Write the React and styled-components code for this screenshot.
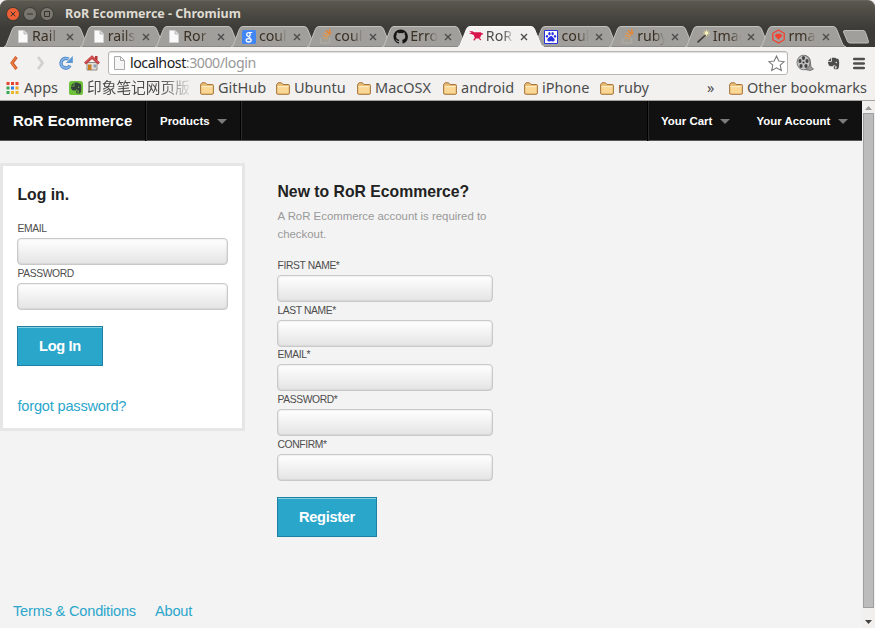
import React from "react";
import styled, { createGlobalStyle } from "styled-components";

const Global = createGlobalStyle`
  * { box-sizing: border-box; }
  body { margin: 0; overflow: hidden; font-family: "Liberation Sans", Arial, sans-serif; }
  a { text-decoration: none; color: inherit; }
`;
const Window = styled.div`
  width: 875px; height: 628px; display: flex; flex-direction: column;
  background: #f3f3f3; overflow: hidden;
`;
const Frame = styled.header`
  height: 47px; background: linear-gradient(#5b594f 0, #4a4943 13px, #3d3c38 27px, #3b3a36 47px);
  border-top: 1px solid #67655b; border-radius: 7px 7px 0 0;
`;
const TitleBar = styled.div`
  height: 25px; display: flex; align-items: center; padding-left: 6px; gap: 3px;
`;
const Title = styled.span`
  margin-left: 8px; font: bold 12.5px/24px "Noto Sans", sans-serif;
  color: #dfdbd2; white-space: nowrap;
`;
const TabStrip = styled.nav`
  display: flex; height: 21px; padding-left: 4px;
`;
const TabBox = styled.div`
  position: relative; flex: none; width: 86.65px; height: 21px; margin-right: -11px;
  z-index: ${(p) => (p.$active ? 2 : 1)};
  display: flex; align-items: center; padding-left: 11px;
`;
const TabShape = styled.svg`
  position: absolute; left: 0; top: 0;
`;
const TabIcon = styled.svg`
  position: relative; flex: none; width: 16px; height: 16px; margin-top: -1px;
`;
const TabLabel = styled.span`
  position: relative; flex: none; width: 28px; margin: -1px 0 0 1px; white-space: nowrap;
  font: 14.2px/20px "Noto Sans", sans-serif; color: ${(p) => (p.$active ? "#4c4c4c" : "#3b3022")};
  mask-image: linear-gradient(90deg, #000 17px, transparent 28px);
`;
const TabClose = styled.svg`
  position: relative; flex: none; width: 8px; height: 8px; margin-left: 6px; margin-top: 1px;
`;
const NewTab = styled.svg`
  flex: none; margin: 4px 0 0 6px;
`;
const Toolbar = styled.div`
  height: 30px; flex: none; background: #f2f1f0; display: flex; align-items: center; padding: 2px 7px 0 6px;
`;
const NavIcons = styled.div`
  display: flex; gap: 10px; width: 102px; align-items: center;
`;
const Address = styled.div`
  width: 680px; height: 24px; border: 1px solid #b9b7b4; border-radius: 3px; background: #fff;
  display: flex; align-items: center; padding: 0 2px 0 4px; box-shadow: inset 0 1px 1px #ddd;
`;
const Url = styled.span`
  flex: 1; margin-left: 3px; font: 14.2px/20px "Noto Sans", sans-serif; color: #999;
  letter-spacing: -0.46px;
  b { font-weight: 400; color: #222; }
`;
const Extensions = styled.div`
  display: flex; align-items: center; gap: 12px; margin-left: 8px;
`;
const Bookmarks = styled.div`
  height: 24px; flex: none; background: #f2f1f0; border-bottom: 1px solid #a5a39f;
  display: flex; align-items: center; padding: 0 0 1px 5px;
`;
const Bookmark = styled.span`
  display: flex; align-items: center; gap: ${(p) => p.$gap || 4}px; width: ${(p) => p.$w}px; flex: none;
  font: 14.5px/20px "Noto Sans", "Noto Sans CJK SC", sans-serif; color: #4c4c4c; white-space: nowrap;
`;
const BookmarkText = styled.span`
  margin-top: -3px;
`;
const Fade = styled(BookmarkText)`
  font-size: 14.7px; margin-top: -2px;
  mask-image: linear-gradient(90deg, #000 74px, transparent 106px);
`;
const View = styled.div`
  flex: 1; display: flex; min-height: 0;
`;
const Page = styled.main`
  width: 862px; height: 527px; background: #f3f3f3;
`;
const TopBar = styled.nav`
  height: 40px; background: #111; display: flex; border-bottom: 1px solid #555; color: #fff;
`;
const Brand = styled.a`
  width: 146px; padding-left: 13px; font: bold 14.9px/40px "Liberation Sans", sans-serif;
`;
const MenuItem = styled.a`
  width: ${(p) => p.$w}px; height: 40px; display: flex; align-items: center; justify-content: space-between;
  padding: 0 14px 0 ${(p) => p.$pl}px; font: bold 11.45px/40px "Liberation Sans", sans-serif;
  border-left: ${(p) => (p.$line ? "1px solid #2b2b2b" : "none")};
  box-shadow: ${(p) => (p.$line ? "-1px 0 0 #000" : "none")};
  &::after { content: ""; border: 5px solid transparent; border-top-color: #7b7b7b; border-bottom: 0; }
`;
const Spacer = styled.div`
  flex: 1; border-left: 1px solid #2b2b2b; box-shadow: -1px 0 0 #000;
`;
const Columns = styled.section`
  display: flex; align-items: flex-start; height: 437px; padding-top: 22px;
`;
const LoginPanel = styled.form`
  width: 245px; height: 268px; background: #fff; border: 3px solid #e6e6e6; padding: 18px 14px 0;
`;
const Register = styled.form`
  width: 216px; margin-left: 32px; padding-top: 18px;
`;
const Heading = styled.h1`
  margin: 0 0 ${(p) => p.$mb}px; padding-left: 0.5px;
  font: bold 15.75px/22px "Liberation Sans", sans-serif; color: #222; white-space: nowrap;
`;
const Hint = styled.p`
  margin: 0 0 14px; padding-left: 0.5px; font-size: 11.4px; line-height: 18px; color: #999; white-space: nowrap;
`;
const Label = styled.label`
  display: block; height: 44.7px; padding-top: 1px; font-size: 10.3px; letter-spacing: -0.38px;
  line-height: 16.9px; color: #4d4d4d; white-space: nowrap; text-indent: 0.5px;
`;
const Input = styled.input`
  display: block; width: 100%; height: 27px; border: 1px solid #c9c9c9; border-radius: 4px;
  background: linear-gradient(#fff, #e4e4e4); box-shadow: inset 0 0 2px rgba(0, 0, 0, 0.18); outline: none;
`;
const Button = styled.button`
  display: block; width: ${(p) => p.$w}px; height: 40px; margin-top: 17px; padding: 0 0 1px;
  border: 1px solid #1e81a3; background: #2ba6cb; box-shadow: inset 0 1px 0 rgba(255, 255, 255, 0.45);
  color: #fff; font: bold 14.6px/36px "Liberation Sans", sans-serif; letter-spacing: -0.3px;
`;
const Link = styled.a`
  color: #2ba6cb; font-size: 14.6px; letter-spacing: -0.2px; line-height: 20px; white-space: nowrap;
`;
const Forgot = styled(Link)`
  display: block; margin-top: 30px; padding-left: 0.5px;
`;
const Footer = styled.footer`
  display: flex; gap: 19px; padding: 23px 0 0 13px;
`;
const Scrollbar = styled.div`
  width: 13px; background: #f1f0ef; display: flex; flex-direction: column; align-items: center; padding-top: 5px;
`;
const Thumb = styled.div`
  width: 11px; height: 495px; margin: 3px 0 12px; background: #bcbcbc; border: 1px solid #9f9f9f;
`;

const Small = ({ w = 16, h = 16, box = "0 0 16 16", children }) => (
  <svg width={w} height={h} viewBox={box}>{children}</svg>
);

const glyphs = {
  page: (
    <>
      <path d="M3.5 2.5h5.5l3.5 3.5v8.5h-9z" fill="#fafafa" stroke="#d2d2d2" />
      <path d="M9 2.5V6h3.5" fill="#ddd" stroke="#bbb" />
    </>
  ),
  google: (
    <>
      <rect x="0" y="2" width="14" height="14" rx="1.5" fill="#4285f4" />
      <circle cx="6.500" cy="6.500" r="1.800" fill="none" stroke="#fff" strokeWidth="1.300" />
      <ellipse cx="6.700" cy="12.300" rx="2.500" ry="1.700" fill="none" stroke="#fff" strokeWidth="1.300" />
      <path d="M7 4.500h3.300M6 8.500q1.800.8 2.500 2" fill="none" stroke="#fff" strokeWidth="1.200" />
    </>
  ),
  stack: (
    <>
      <path d="M2.500 10v4.800h9V10" fill="none" stroke="#b0aba2" strokeWidth="1.300" />
      <path d="M4.300 12.700h5.500" stroke="#a89f90" strokeWidth="1.200" />
      <path d="M4.300 10.200l5.600.6" stroke="#c1a277" strokeWidth="1.200" />
      <path d="M4.800 7.400l5.400 1.800M6 4.500l4.800 3.200" stroke="#e79a4b" strokeWidth="1.200" />
      <path d="M8.200 2.200l3.500 4.500M11.400 1l1.300 5.200" stroke="#f4811f" strokeWidth="1.300" />
    </>
  ),
  github: (
    <path transform="translate(.5 1.500) scale(.9)" fill="#161514" d="M8 0C3.58 0 0 3.58 0 8c0 3.54 2.29 6.53 5.47 7.59.4.07.55-.17.55-.38v-1.49c-2.01.37-2.53-.49-2.69-.94-.09-.23-.48-.94-.82-1.13-.28-.15-.68-.52-.01-.53.63-.01 1.08.58 1.23.82.72 1.21 1.87.87 2.33.66.07-.52.28-.87.51-1.07-1.78-.2-3.64-.89-3.64-3.95 0-.87.31-1.59.82-2.15-.08-.2-.36-1.02.08-2.12 0 0 .67-.21 2.2.82a7.6 7.6 0 0 1 4 0c1.53-1.04 2.2-.82 2.2-.82.44 1.1.16 1.92.08 2.12.51.56.82 1.27.82 2.15 0 3.07-1.87 3.75-3.65 3.95.29.25.54.73.54 1.48v2.2c0 .21.15.46.55.38A8 8 0 0 0 16 8c0-4.42-3.58-8-8-8z" />
  ),
  ror: (
    <path fill="#d9144a" d="M0 3l3.500.2L5 4.300h6.800l.9 1h1.300v.9l-1.800.7-.8 2.300-1 .9 1.500.8.300 1.200-1.100.200-1.300-1.700H6.800l-1 1.800-1.300-.200.200-1.200 1.100-.9-1-3.200L0 5.200l2.600-.8z" />
  ),
  baidu: (
    <>
      <path d="M.5 2.500h13v13H.5z" fill="#fff" stroke="#2932e1" />
      <path d="M7 8c1.500 0 2 1.500 3.200 2.500 1.200 1.400.2 3.300-1.500 2.900-1-.3-2.400-.3-3.400 0-1.700.4-2.700-1.500-1.500-2.900C5 9.500 5.500 8 7 8z" fill="#2932e1" />
      <ellipse cx="5.400" cy="5.700" rx="1.200" ry="1.600" fill="#2932e1" /><ellipse cx="8.600" cy="5.700" rx="1.200" ry="1.600" fill="#2932e1" />
      <ellipse cx="3" cy="8.300" rx="1.100" ry="1.400" fill="#2932e1" /><ellipse cx="11" cy="8.300" rx="1.100" ry="1.400" fill="#2932e1" />
    </>
  ),
  wand: (
    <>
      <path d="M1.500 14.300L9.500 7" stroke="#3f3b36" strokeWidth="1.600" />
      <path d="M10.500 1.500v7M7 5h7M8 2.500l5 5M13 2.500l-5 5" stroke="#e8dc9c" strokeWidth=".8" />
      <circle cx="10.500" cy="5" r="1.700" fill="#faf2bd" />
    </>
  ),
  mine: (
    <>
      <path d="M7.500 2l5.700 3.300v6.400L7.500 15l-5.700-3.300V5.300z" fill="none" stroke="#f4402e" strokeWidth="1.300" />
      <path d="M5.300 5.700h4.400l1.600 2-3.800 4.100-3.800-4.100z" fill="#f4402e" />
    </>
  ),
};

const tabs = [
  ["page", "Rail"], ["page", "rails"], ["page", "Ror"], ["google", "coul"], ["stack", "coul"],
  ["github", "Erro"], ["ror", "RoR", true], ["baidu", "coul"], ["stack", "ruby"], ["wand", "Imag"], ["mine", "rma"],
];

const Tab = ({ icon, label, active }) => (
  <TabBox $active={active}>
    <TabShape width="87" height="21" viewBox="0 0 87 21">
      <path d="M0 21L2 19.500 8.500 3Q9.500.5 12 .5H73Q75.500.5 76.500 3L83 19l3 2z"
        fill={active ? "#f2f1f0" : "#a09f9c"} />
      <path d="M0 21L2 19.500 8.500 3Q9.500.5 12 .5H73Q75.500.5 76.500 3L83 19l3 2" fill="none"
        stroke={active ? "#fbfbfa" : "#c3c1bc"} />
      {!active && <path d="M3 20.500h81" stroke="#8b8a86" />}
    </TabShape>
    <TabIcon viewBox="0 0 16 16">{glyphs[icon]}</TabIcon>
    <TabLabel $active={active}>{label}</TabLabel>
    <TabClose viewBox="0 0 8 8"><path d="M1 1l6 6M7 1L1 7" stroke="#4d4c49" strokeWidth="1.400" /></TabClose>
  </TabBox>
);

const Folder = () => (
  <Small w={14} h={13} box="0 0 14 13">
    <path d="M.6 11V2.500L2 .8h3.500L7 2.500h5.500q.9 0 .9 1V11q0 1.300-1 1.300h-10.600Q.6 12.300.6 11z" fill="#e9bd73" stroke="#a5763f" />
    <path d="M1.500 4.500h11V11.300h-11z" fill="#fbd795" /><path d="M1.500 4.600h11" stroke="#fff0c9" />
  </Small>
);
const Elephant = ({ fill, eye }) => (
  <>
    <path fill={fill} d="M2 5.300L5.300 2v3.300zM6.200 1.800h3.600l1.200.9 2.300.5q1 2.500.7 6.300-.2 4.300-1.800 4.700H9.500Q8 14 8.100 12.200q.2-1.600 2-1.500v1.200q-.9 0-.9.800.1.600 1 .600 1.400.1 1.200-1.400-.1-1.700-2-1.800L8.200 9.500l-.5 1.300q-3 .6-4.500-.8Q2.200 8.500 2 6.200h4.200z" />
    <circle cx="11" cy="7" r=".8" fill={eye} />
  </>
);

const folders = [["GitHub", 76], ["Ubuntu", 81], ["MacOSX", 86], ["android", 81], ["iPhone", 76], ["ruby", 107]];
const fields = ["FIRST NAME*", "LAST NAME*", "EMAIL*", "PASSWORD*", "CONFIRM*"];
const appDots = ["#e6432c", "#e6432c", "#e8432c", "#3aa757", "#2d7de0", "#e8a51e", "#3aa757", "#e8b72c", "#e8b72c"];
const reelHoles = [[8, 4.5], [4.5, 7.5], [11.5, 7.5], [5.5, 12.5], [10.5, 12.5]];

const WindowButton = ({ kind }) => (
  <Small w={14} h={14} box="0 0 14 14">
    <circle cx="7" cy="7" r="6.500" fill={kind === "close" ? "#ee6137" : "#787670"} stroke="#35342f" strokeWidth=".8" />
    <path d={kind === "close" ? "M4.700 4.700l4.600 4.600m0-4.600L4.700 9.300" : kind === "min" ? "M4 7h6" : "M4.500 4.500h5v5h-5z"}
      fill="none" stroke="#3c3029" strokeWidth="1" />
  </Small>
);

export default function App() {
  return (
    <Window>
      <Global />
      <Frame>
        <TitleBar>
          <WindowButton kind="close" /><WindowButton kind="min" /><WindowButton kind="max" />
          <Title>RoR Ecommerce - Chromium</Title>
        </TitleBar>
        <TabStrip>
          {tabs.map(([icon, label, active], i) => <Tab key={i} icon={icon} label={label} active={active} />)}
          <NewTab width="28" height="14" viewBox="0 0 28 14">
            <path d="M3 .5h18q2 0 2.500 2l3 9q.5 1.500-1 1.500H8q-2 0-2.700-2L1.500 2Q1 .5 3 .5z" fill="#a09f9b" stroke="#c0beb9" />
          </NewTab>
        </TabStrip>
      </Frame>
      <Toolbar>
        <NavIcons>
          <Small><path d="M10.500 2L6 8l4.500 6" fill="none" stroke="#cf5424" strokeWidth="3" /><path d="M10 2.500L5.800 8l4.200 5.500" fill="none" stroke="#f08a45" strokeWidth="1.200" /></Small>
          <Small><path d="M6 2l4.500 6L6 14" fill="none" stroke="#d2d0cd" strokeWidth="2.800" /></Small>
          <Small>
            <path d="M12 10.500A4.800 4.800 0 1 1 10.500 4.200" fill="none" stroke="#4a86c8" strokeWidth="3.400" />
            <path d="M14.800 1v7H7.800z" fill="#5c96d3" />
            <path d="M12 10.500A4.800 4.800 0 1 1 10.500 4.200" fill="none" stroke="#8db9e6" strokeWidth="1.500" />
          </Small>
          <Small>
            <path d="M3 7.500h10v7.500H3z" fill="#e4e0d9" stroke="#8e8a83" /><path d="M4 9.500h3.500V15H4z" fill="#c97c22" />
            <path d="M9.500 9.500h2.500v3H9.500z" fill="#8a9fb4" /><path d="M11 1h2.500v5L11 4z" fill="#b43538" />
            <path d="M1 8.500L8 2.200l7 6.300" fill="none" stroke="#c23b3d" strokeWidth="2.800" />
            <path d="M1.500 7.500L8 1.800l6.500 5.700" fill="none" stroke="#e06a69" strokeWidth=".8" />
          </Small>
        </NavIcons>
        <Address>
          <Small w={14} h={16} box="2 0 14 16">
            <path d="M3.500 1.500h6l4 4v9h-10z" fill="#f6f6f6" stroke="#aaa" /><path d="M9.500 1.500v4h4" fill="none" stroke="#aaa" />
          </Small>
          <Url><b>localhost</b>:3000/login</Url>
          <Small w={17} h={17}>
            <path d="M8 1l2.200 4.600 5 .6-3.700 3.400 1 5L8 12.100l-4.500 2.500 1-5L.8 6.200l5-.6z" fill="#fff" stroke="#777" />
          </Small>
        </Address>
        <Extensions>
          <Small w={18} h={18} box="0 0 18 18">
            <path d="M9 1.500q4 .5 5 4l1 7.500 2.500 2-3 1.500-6-1z" fill="#999" stroke="#666" strokeWidth=".8" />
            <ellipse cx="7.500" cy="8.500" rx="6.500" ry="7.300" fill="#c2c2c2" stroke="#666" strokeWidth=".8" />
            {reelHoles.map(([x, y]) => <ellipse key={`${x}-${y}`} cx={x - 0.5} cy={y - 0.5} rx="1.600" ry="1.900" fill="#444" />)}
            <circle cx="7.500" cy="8.500" r="1" fill="#333" />
          </Small>
          <Small w={15} h={15}><Elephant fill="#4c4c4c" eye="#f2f1f0" /></Small>
          <Small w={12} h={14} box="0 0 12 14"><path d="M1.200 3h9.600M1.200 7.500h9.600M1.200 12h9.600" stroke="#4f4e4c" strokeWidth="2.600" strokeLinecap="round" /></Small>
        </Extensions>
      </Toolbar>
      <Bookmarks>
        <Bookmark $w={64} $gap={5}>
          <Small w={14} h={13} box="-1.5 0 14 13">
            {appDots.map((c, i) => (
              <rect key={i} x={(i % 3) * 4.5} y={Math.floor(i / 3) * 4.5} width="3" height="3" fill={c} />
            ))}
          </Small>
          <BookmarkText>Apps</BookmarkText>
        </Bookmark>
        <Bookmark $w={131}>
          <Small w={14} h={14}>
            <rect width="16" height="16" rx="3" fill="#6fc13a" /><Elephant fill="#34423b" eye="#6fc13a" />
          </Small>
          <Fade>印象笔记网页版</Fade>
        </Bookmark>
        {folders.map(([name, w]) => <Bookmark key={name} $w={w}><Folder /><BookmarkText>{name}</BookmarkText></Bookmark>)}
        <Bookmark $w={22}><BookmarkText>»</BookmarkText></Bookmark>
        <Bookmark $w={140}><Folder /><BookmarkText>Other bookmarks</BookmarkText></Bookmark>
      </Bookmarks>
      <View>
        <Page>
          <TopBar>
            <Brand href="#">RoR Ecommerce</Brand>
            <MenuItem href="#" $w={95} $pl={13} $line>Products</MenuItem>
            <Spacer />
            <MenuItem href="#" $w={96} $pl={12} $line>Your Cart</MenuItem>
            <MenuItem href="#" $w={118} $pl={12.5}>Your Account</MenuItem>
          </TopBar>
          <Columns>
            <LoginPanel>
              <Heading $mb={14}>Log in.</Heading>
              <Label>EMAIL<Input /></Label>
              <Label>PASSWORD<Input type="password" /></Label>
              <Button type="button" $w={86}>Log In</Button>
              <Forgot href="#">forgot password?</Forgot>
            </LoginPanel>
            <Register>
              <Heading $mb={4}>New to RoR Ecommerce?</Heading>
              <Hint>A RoR Ecommerce account is required to<br />checkout.</Hint>
              {fields.map((f) => <Label key={f}>{f}<Input /></Label>)}
              <Button type="button" $w={100}>Register</Button>
            </Register>
          </Columns>
          <Footer><Link href="#">Terms &amp; Conditions</Link><Link href="#">About</Link></Footer>
        </Page>
        <Scrollbar>
          <Small w={7} h={4} box="0 0 7 4"><path d="M0 4l3.500-4L7 4z" fill="#999" /></Small>
          <Thumb />
          <Small w={7} h={4} box="0 0 7 4"><path d="M0 0l3.500 4L7 0z" fill="#444" /></Small>
        </Scrollbar>
      </View>
    </Window>
  );
}
